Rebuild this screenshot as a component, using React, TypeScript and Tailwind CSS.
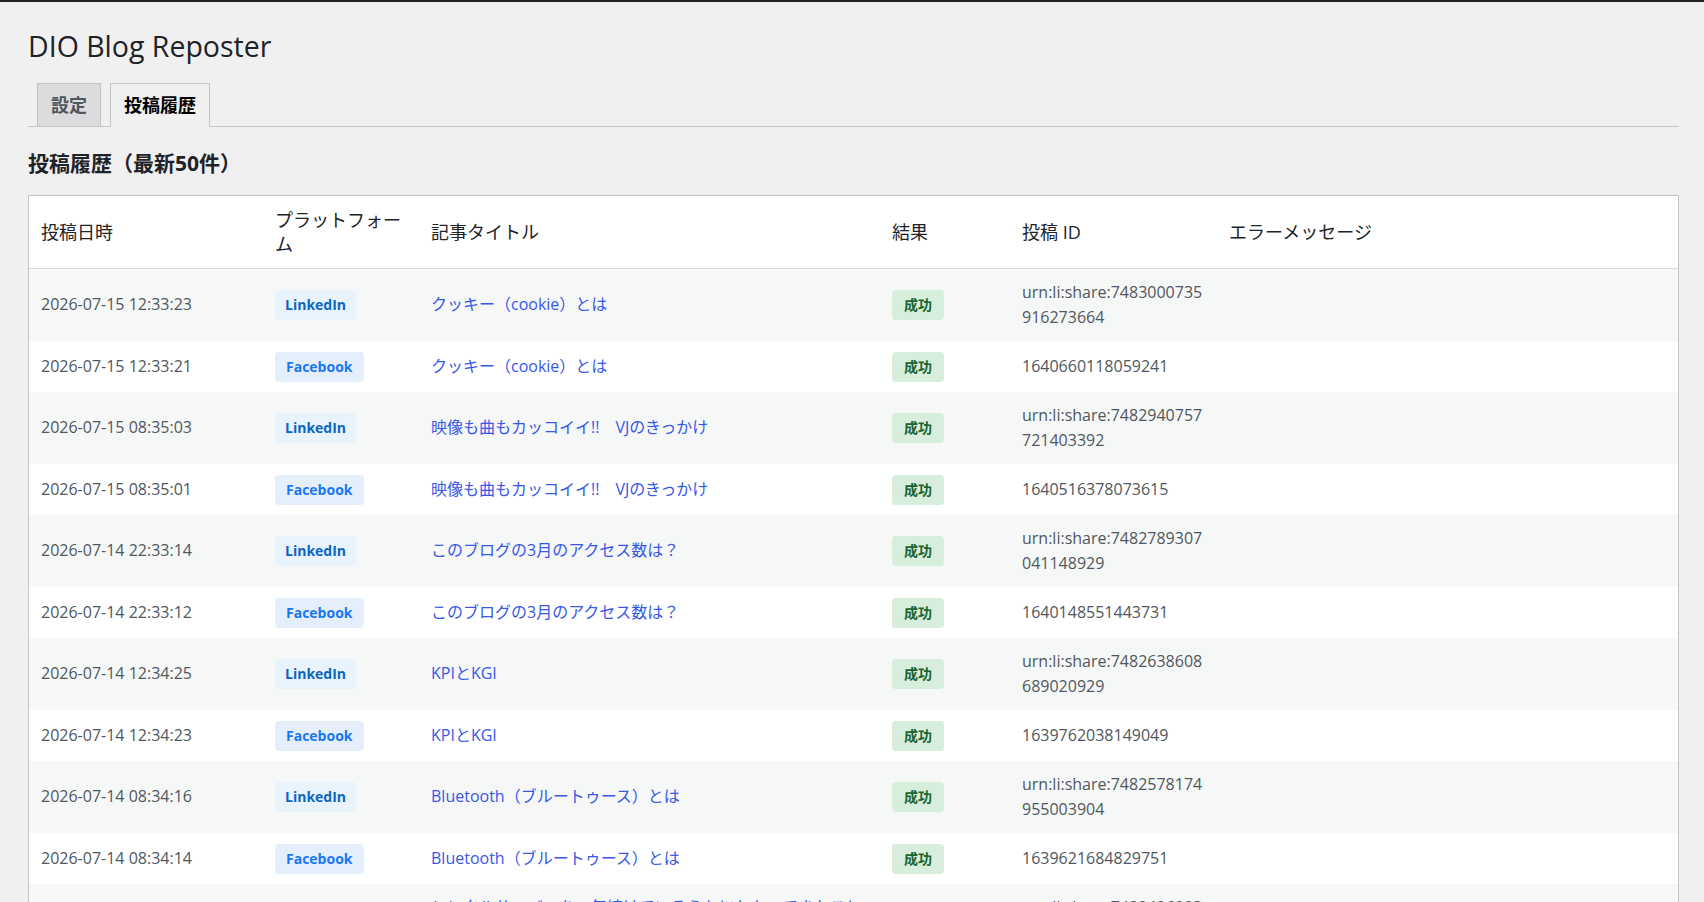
import React from "react";

type Row = {
  date: string;
  platform: "LinkedIn" | "Facebook";
  title: string;
  postId: string;
};

const rows: Row[] = [
  { date: "2026-07-15 12:33:23", platform: "LinkedIn", title: "クッキー（cookie）とは", postId: "urn:li:share:7483000735916273664" },
  { date: "2026-07-15 12:33:21", platform: "Facebook", title: "クッキー（cookie）とは", postId: "1640660118059241" },
  { date: "2026-07-15 08:35:03", platform: "LinkedIn", title: "映像も曲もカッコイイ!!　VJのきっかけ", postId: "urn:li:share:7482940757721403392" },
  { date: "2026-07-15 08:35:01", platform: "Facebook", title: "映像も曲もカッコイイ!!　VJのきっかけ", postId: "1640516378073615" },
  { date: "2026-07-14 22:33:14", platform: "LinkedIn", title: "このブログの3月のアクセス数は？", postId: "urn:li:share:7482789307041148929" },
  { date: "2026-07-14 22:33:12", platform: "Facebook", title: "このブログの3月のアクセス数は？", postId: "1640148551443731" },
  { date: "2026-07-14 12:34:25", platform: "LinkedIn", title: "KPIとKGI", postId: "urn:li:share:7482638608689020929" },
  { date: "2026-07-14 12:34:23", platform: "Facebook", title: "KPIとKGI", postId: "1639762038149049" },
  { date: "2026-07-14 08:34:16", platform: "LinkedIn", title: "Bluetooth（ブルートゥース）とは", postId: "urn:li:share:7482578174955003904" },
  { date: "2026-07-14 08:34:14", platform: "Facebook", title: "Bluetooth（ブルートゥース）とは", postId: "1639621684829751" },
  { date: "2026-07-13 22:34:02", platform: "LinkedIn", title: "レンタルサーバーを一年続けているうちにわかってきたことをまとめてみた", postId: "urn:li:share:7482426093481906176" },
];

function PlatformBadge({ platform }: { platform: Row["platform"] }) {
  if (platform === "LinkedIn") {
    return (
      <span className="inline-block rounded-[4px] bg-[#e9f3fb] px-[10px] py-[5px] align-middle text-[14px] font-bold leading-[20px] text-[#0a66c2]">
        LinkedIn
      </span>
    );
  }
  return (
    <span className="inline-block rounded-[4px] bg-[#e5effc] px-[11px] py-[5px] align-middle text-[14px] font-bold leading-[20px] text-[#1877f2]">
      Facebook
    </span>
  );
}

export default function App() {
  const td = "px-[12px] py-[10.5px] align-middle text-[16px] leading-[25.5px]";

  return (
    <div
      className="min-h-screen bg-[#f0f0f1] text-[#1d2327]"
      style={{ fontFamily: '"Open Sans", "Noto Sans CJK JP", sans-serif' }}
    >
      <div className="h-[2px] bg-[#1d2327]" />

      <div className="pl-[28px] pr-[25px]">
        {/* Title */}
        <h1 className="mt-[26px] text-[28.5px] font-normal leading-[37px] text-[#1d2327]">DIO Blog Reposter</h1>

        {/* Tabs */}
        <div className="mt-[18px] flex items-end gap-[9px] border-b border-[#c3c4c7] pl-[9px]">
          <span className="-mb-px border border-[#c3c4c7] bg-[#dcdcde] px-[13px] py-[6px] text-[18px] font-semibold leading-[30px] text-[#50575e]">
            設定
          </span>
          <span className="-mb-px border border-[#c3c4c7] border-b-[#f0f0f1] bg-[#f0f0f1] px-[13px] py-[6px] text-[18px] font-semibold leading-[30px] text-black">
            投稿履歴
          </span>
        </div>

        {/* Heading */}
        <h2 className="mt-[22px] text-[21px] font-bold leading-[29px] text-[#1d2327]">投稿履歴（最新50件）</h2>

        {/* History table */}
        <div className="mt-[17px] border border-[#c3c4c7] bg-white">
          <table className="w-full table-fixed border-collapse">
            <colgroup>
              <col className="w-[234px]" />
              <col className="w-[156px]" />
              <col className="w-[461px]" />
              <col className="w-[130px]" />
              <col className="w-[207px]" />
              <col />
            </colgroup>
            <thead>
              <tr className="border-b border-[#dcdcde]">
                {["投稿日時", "プラットフォーム", "記事タイトル", "結果", "投稿 ID", "エラーメッセージ"].map((h) => (
                  <th
                    key={h}
                    className="px-[12px] py-[12px] text-left align-middle text-[18px] font-normal leading-[24px] text-[#1d2327]"
                  >
                    {h}
                  </th>
                ))}
              </tr>
            </thead>
            <tbody>
              {rows.map((r, i) => (
                <tr key={i} className={i % 2 === 0 ? "bg-[#f6f7f7]" : "bg-white"}>
                  <td className={`${td} text-[#50575e]`}>{r.date}</td>
                  <td className={td}>
                    <PlatformBadge platform={r.platform} />
                  </td>
                  <td className={td}>
                    <a href="#" className="text-[#3858e9]">{r.title}</a>
                  </td>
                  <td className={td}>
                    <span className="inline-block rounded-[4px] bg-[#d6eedb] px-[12px] py-[5px] align-middle text-[14px] font-bold leading-[20px] text-[#1b6330]">
                      成功
                    </span>
                  </td>
                  <td className={`${td} break-all text-[#50575e]`}>{r.postId}</td>
                  <td className={`${td} text-[#50575e]`}></td>
                </tr>
              ))}
            </tbody>
          </table>
        </div>
      </div>
    </div>
  );
}
